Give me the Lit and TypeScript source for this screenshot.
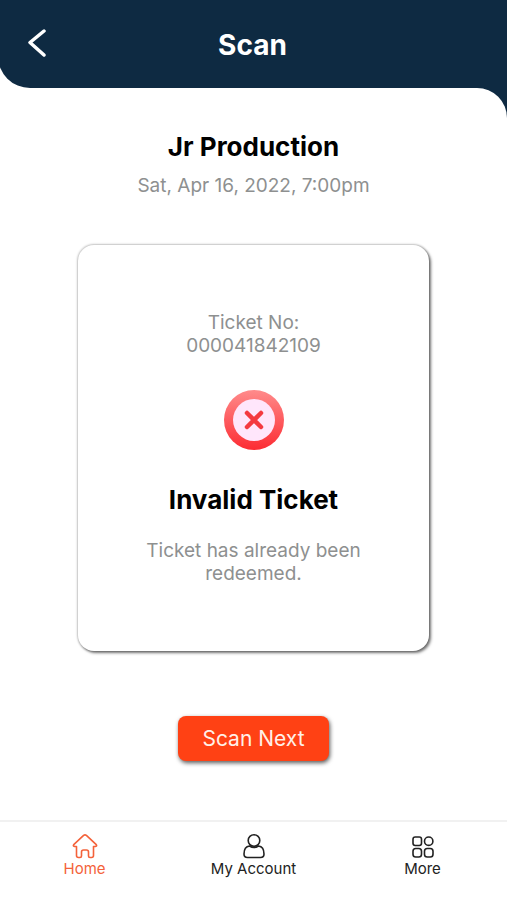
import { LitElement, html, css, svg } from "lit";
import { customElement, property } from "lit/decorators.js";

const homeIcon = svg`<path d="M4.500 13.500 H2.600 Q0.400 13.200 2 11.400 L11.600 2.400 Q13 1.200 14.400 2.400 L24 11.400 Q25.600 13.200 23.400 13.500 H21.500 V22.500 Q21.500 24.500 19.500 24.500 H18 Q16.500 24.500 16.500 23 V19 Q16.500 17 14.500 17 H11.500 Q9.500 17 9.500 19 V23 Q9.500 24.500 8 24.500 H6.500 Q4.500 24.500 4.500 22.500 Z"/>`;
const accountIcon = svg`<circle cx="13" cy="7.500" r="5.800"/><path d="M8.500 13 C4.500 13.500 3 17.500 3 21 Q3 24.500 6.500 24.500 H19.500 Q23 24.500 23 21 C23 17.500 21.500 13.500 17.500 13 Q13 16 8.500 13 Z"/>`;
const moreIcon = svg`<rect x="3" y="4" width="8.500" height="8.500" rx="2.200"/><circle cx="18.700" cy="8.200" r="4.200"/><rect x="3" y="15.500" width="8.500" height="8.500" rx="2.700"/><rect x="14.500" y="15.500" width="8.500" height="8.500" rx="2.700"/>`;

@customElement("tab-bar")
export class TabBar extends LitElement {
  @property() current = "Home";

  static styles = css`
    :host {
      display: block;
      border-top: 2px solid #f1f1f1;
      background: #fff;
    }
    .tabs {
      display: grid;
      grid-template-columns: repeat(3, 1fr);
      padding: 11px 0 21px;
    }
    .tab {
      display: flex;
      flex-direction: column;
      align-items: center;
      color: #222;
      font-size: 15px;
      line-height: 20px;
      text-decoration: none;
    }
    .current {
      color: #f4623a;
    }
    .icon {
      width: 26px;
      height: 26px;
      fill: none;
      stroke: currentColor;
      stroke-width: 1.6;
      stroke-linejoin: round;
    }
  `;

  render() {
    const tabs = [
      { label: "Home", icon: homeIcon },
      { label: "My Account", icon: accountIcon },
      { label: "More", icon: moreIcon },
    ];
    return html`<nav class="tabs">
      ${tabs.map(
        (t) => html`<a class="tab ${t.label === this.current ? "current" : ""}" href="#">
          <svg class="icon" viewBox="0 0 26 26" aria-hidden="true">${t.icon}</svg>
          ${t.label}
        </a>`
      )}
    </nav>`;
  }
}

@customElement("app-root")
export class AppRoot extends LitElement {
  static styles = css`
    :host {
      display: flex;
      flex-direction: column;
      min-height: 100vh;
      font-family: Inter, "Liberation Sans", sans-serif;
      background: #fff;
      color: #000;
    }
    .header {
      display: grid;
      grid-template-columns: 1fr auto 1fr;
      align-items: center;
      height: 88px;
      margin-left: -2px;
      padding: 2px 24px 0;
      box-sizing: border-box;
      background: #0e2a42;
      border-bottom-left-radius: 32px;
      color: #fff;
    }
    .back {
      justify-self: start;
      display: flex;
      padding: 0 2px 6px;
      border: 0;
      background: none;
      color: inherit;
    }
    .chevron {
      width: 26px;
      height: 30px;
      fill: none;
      stroke: currentColor;
      stroke-width: 3.5;
      stroke-linecap: round;
      stroke-linejoin: round;
    }
    h1,
    h2,
    p {
      margin: 0;
    }
    .title {
      font-size: 28px;
      line-height: 34px;
      font-weight: 700;
    }
    .backdrop {
      flex: 1;
      display: flex;
      background: linear-gradient(to right, #fff 50%, #0e2a42 50%);
    }
    .sheet {
      flex: 1;
      display: flex;
      flex-direction: column;
      align-items: center;
      padding: 42px 78px 56px;
      background: #fff;
      border-top-right-radius: 30px;
      text-align: center;
    }
    .heading {
      font-size: 26px;
      line-height: 34px;
      font-weight: 700;
    }
    .muted {
      font-size: 19px;
      line-height: 23px;
      color: #8e9090;
    }
    .date {
      margin-top: 10px;
    }
    .card {
      align-self: stretch;
      display: flex;
      flex-direction: column;
      align-items: center;
      margin-top: 48px;
      padding: 66px 64px;
      border-radius: 16px;
      background: #fff;
      box-shadow: 0 0 2px 1px rgba(0, 0, 0, 0.22), 2px 2px 3px rgba(0, 0, 0, 0.5);
    }
    .status {
      width: 60px;
      height: 60px;
      margin: 33px 0;
    }
    .reason {
      margin-top: 22px;
    }
    .next {
      margin-top: 65px;
      padding: 0 24px;
      border: 0;
      border-radius: 8px;
      background: #ff4114;
      box-shadow: 1px 2px 4px rgba(0, 0, 0, 0.65);
      color: #fff0e8;
      font-family: inherit;
      font-size: 21px;
      line-height: 45px;
    }
  `;

  render() {
    return html`
      <header class="header">
        <button class="back" aria-label="Back">
          <svg class="chevron" viewBox="0 0 26 30" aria-hidden="true">
            <path d="M20 4 L6 15.500 L20 28" />
          </svg>
        </button>
        <h1 class="title">Scan</h1>
      </header>
      <div class="backdrop">
        <main class="sheet">
          <h2 class="heading">Jr Production</h2>
          <p class="muted date">Sat, Apr 16, 2022, 7:00pm</p>
          <section class="card">
            <p class="muted">Ticket No:<br />000041842109</p>
            <svg class="status" viewBox="0 0 60 60" aria-hidden="true">
              <defs>
                <linearGradient id="ring" x1="0" y1="0" x2="0" y2="1">
                  <stop offset="0" stop-color="#ff8b8b" />
                  <stop offset="1" stop-color="#fc2c33" />
                </linearGradient>
              </defs>
              <circle cx="30" cy="30" r="30" fill="url(#ring)" />
              <circle cx="30" cy="30" r="21" fill="#ffe6fb" />
              <path d="M23 23 L37 37 M37 23 L23 37" stroke="#f43a40" stroke-width="4.500" stroke-linecap="round" />
            </svg>
            <h2 class="heading">Invalid Ticket</h2>
            <p class="muted reason">Ticket has already been redeemed.</p>
          </section>
          <button class="next">Scan Next</button>
        </main>
      </div>
      <tab-bar current="Home"></tab-bar>
    `;
  }
}
